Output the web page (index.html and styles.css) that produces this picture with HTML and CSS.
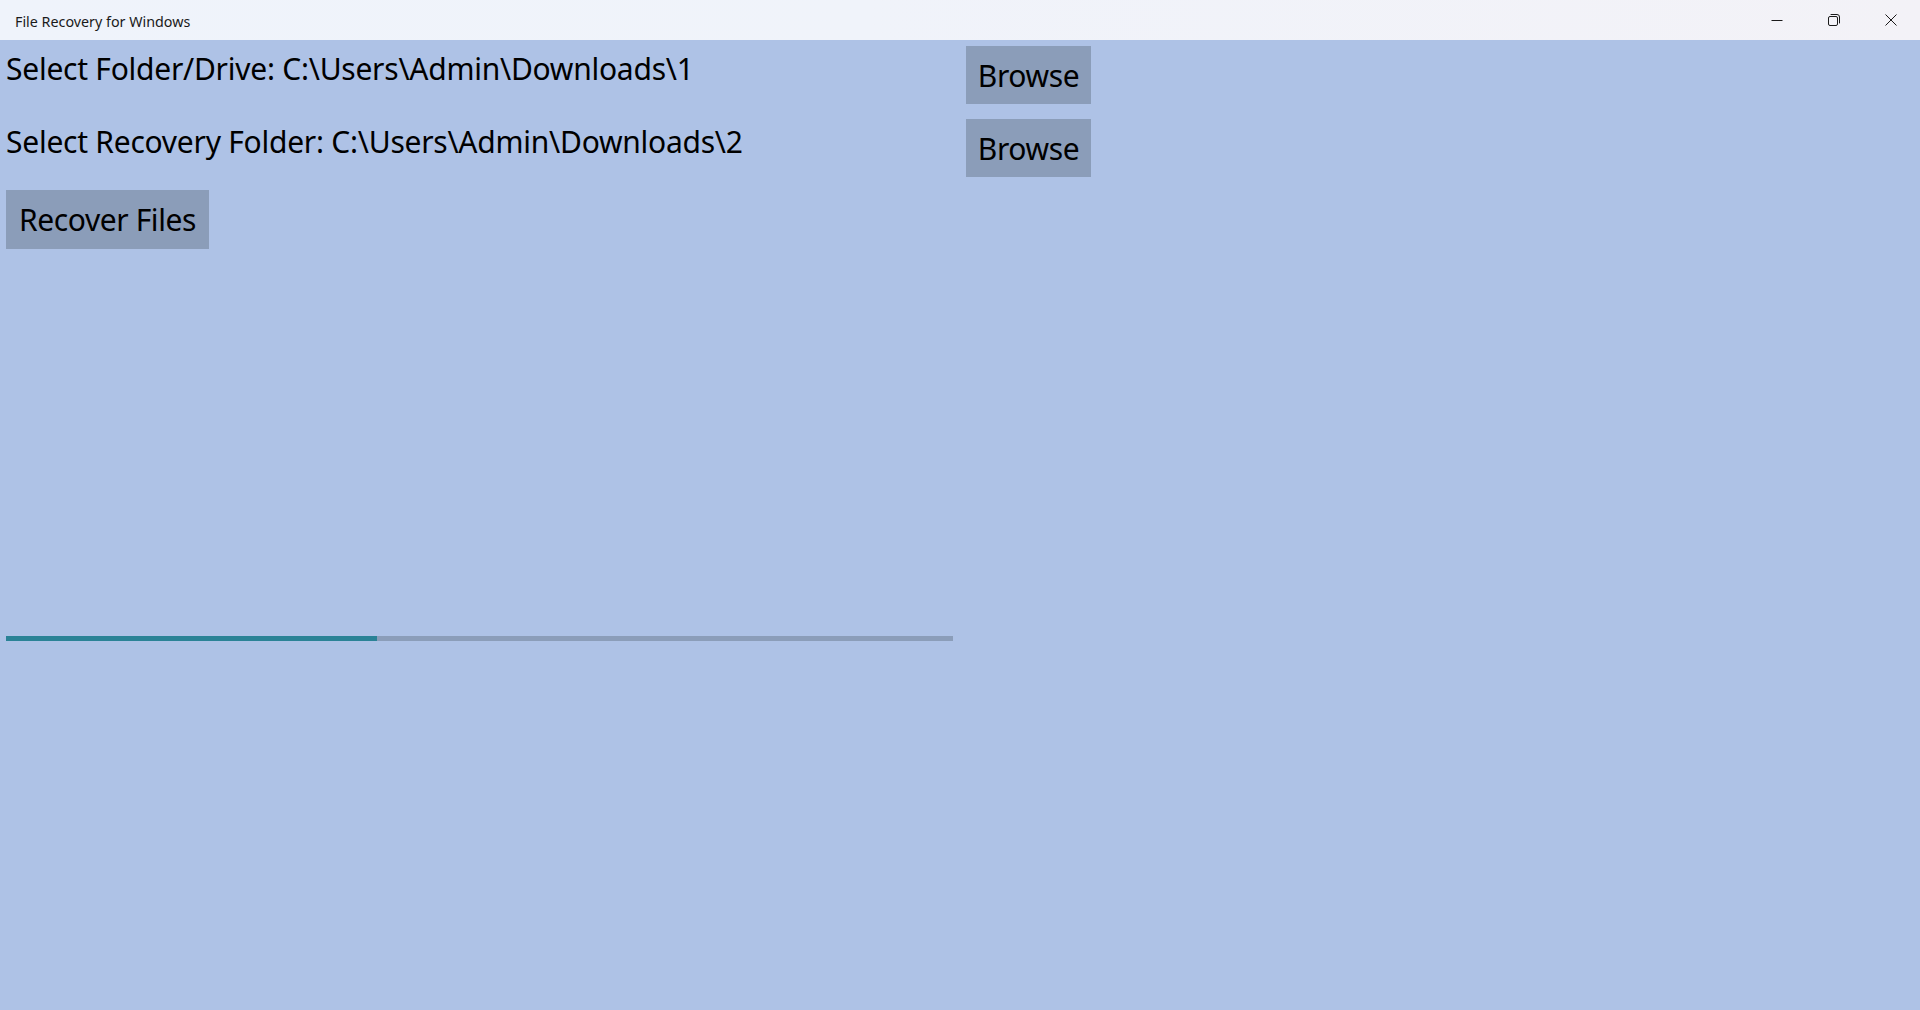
FILE: index.html
```html
<!DOCTYPE html>
<html>
  <head>
    <meta charset="UTF-8" />
    <title>File Recovery for Windows</title>
    <link rel="stylesheet" href="styles.css">
  </head>
  <body>
    <div class="title-bar">
      <div class="title-bar-text">File Recovery for Windows</div>
      <div class="title-bar-controls">
        <div class="title-bar-button" id="minimizeBtn">
          <svg viewBox="0 0 12 12" class="caption-icon">
            <path d="M0.5 6.5h11" />
          </svg>
        </div>
        <div class="title-bar-button" id="restoreBtn">
          <svg viewBox="0 0 12 12" class="caption-icon">
            <rect x="0.5" y="2.5" width="9" height="9" rx="1.5" />
            <path d="M2.6 0.5h6.4a2.5 2.5 0 0 1 2.5 2.5v6.4" />
          </svg>
        </div>
        <div class="title-bar-button close" id="closeBtn">
          <svg viewBox="0 0 12 12" class="caption-icon">
            <path d="M0.5 0.5l11 11M11.5 0.5l-11 11" />
          </svg>
        </div>
      </div>
    </div>

    <div class="container">
      <div class="picker-row">
        <div class="picker-label" id="sourcePath">Select Folder/Drive: C:\Users\Admin\Downloads\1</div>
        <button class="browse-btn" id="browseSource">Browse</button>
      </div>
      <div class="picker-row">
        <div class="picker-label" id="targetPath">Select Recovery Folder: C:\Users\Admin\Downloads\2</div>
        <button class="browse-btn" id="browseTarget">Browse</button>
      </div>

      <button class="recover-btn" id="recoverBtn">Recover Files</button>

      <div class="progress">
        <div class="progress-fill" style="width: 39.2%"></div>
      </div>
    </div>
  </body>
</html>
```

FILE: styles.css
```css
body {
  font-family: "Noto Sans", "Open Sans", sans-serif;
  margin: 0;
  padding: 0;
  background-color: #aec2e6;
  color: #000;
  height: 1010px;
  overflow: hidden;
}
.title-bar {
  height: 40px;
  display: flex;
  justify-content: space-between;
  align-items: center;
  background: linear-gradient(90deg, #eff3fb 0%, #f0f3fa 45%, #f3f2f7 100%);
}
.title-bar-text {
  margin-left: 15px;
  font-size: 14.3px;
  color: #1a1a1a;
  padding-top: 2px;
}
.title-bar-controls {
  display: flex;
  align-self: stretch;
  margin-right: 1px;
}
.title-bar-button {
  width: 57px;
  display: flex;
  justify-content: center;
  align-items: center;
}
.caption-icon {
  width: 12px;
  height: 12px;
  fill: none;
  stroke: #1a1a1a;
  stroke-width: 1;
}
.container {
  padding: 6px;
}
.picker-row {
  display: grid;
  grid-template-columns: 947px auto;
  column-gap: 13px;
  align-items: start;
  margin-bottom: 15px;
}
.picker-row + .picker-row {
  margin-bottom: 13px;
}
.picker-label {
  font-size: 30px;
  letter-spacing: -0.25px;
  line-height: 40px;
  padding-top: 3px;
  white-space: nowrap;
}
button {
  font-family: "Noto Sans", "Open Sans", sans-serif;
  font-size: 30px;
  letter-spacing: -0.4px;
  color: #000;
  background-color: #8b9db9;
  border: none;
  border-radius: 0;
  height: 58px;
  cursor: pointer;
}
.browse-btn {
  justify-self: start;
  width: 125px;
  padding: 0;
}
.recover-btn {
  display: block;
  width: 203px;
  height: 59px;
  padding: 0;
}
.progress {
  width: 947px;
  height: 5px;
  margin-top: 387px;
  background-color: #8b9db9;
}
.progress-fill {
  height: 100%;
  background-color: #2a8296;
}
```
